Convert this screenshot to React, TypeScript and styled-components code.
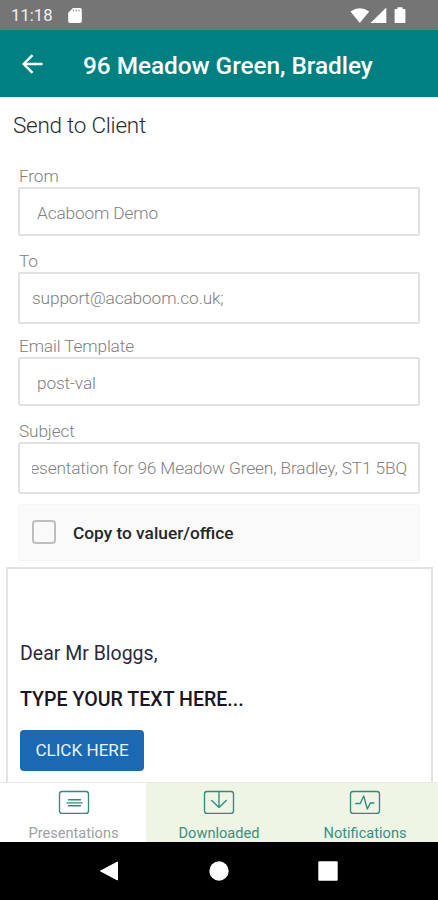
import React from "react";
import styled, { createGlobalStyle } from "styled-components";

const GlobalStyle = createGlobalStyle`
  * { box-sizing: border-box; }
  html, body { margin: 0; background: #fff; }
  body { font-family: Roboto, "Liberation Sans", sans-serif; }
`;

const Screen = styled.div`
  width: 438px;
  height: 900px;
  display: flex;
  flex-direction: column;
  overflow: hidden;
  background: #fff;
`;

const StatusBar = styled.div`
  height: 30px;
  flex: none;
  display: flex;
  align-items: center;
  padding: 2px 32px 0 11px;
  background: #757575;
  color: #fff;
`;

const Clock = styled.span`
  width: 56px;
  font-size: 16.7px;
  line-height: 20px;
  color: #f2f2f2;
`;

const StatusIcons = styled.div`
  margin-left: auto;
  display: flex;
`;

const AppBar = styled.header`
  height: 67px;
  flex: none;
  display: flex;
  align-items: center;
  padding-left: 21px;
  background: #008080;
  color: #fff;
  svg { display: block; }
`;

const AppTitle = styled.h1`
  margin: 4px 0 0 39px;
  font-size: 24.4px;
  line-height: 30px;
  font-weight: 500;
  letter-spacing: -0.05px;
  white-space: nowrap;
`;

const Content = styled.main`
  flex: 1;
  min-height: 0;
  display: flex;
  flex-direction: column;
  overflow: hidden;
`;

const Heading = styled.h2`
  margin: 14px 0 0 13px;
  height: 54px;
  font-size: 22.5px;
  line-height: 28px;
  font-weight: 300;
  letter-spacing: -0.25px;
  color: #2c2c2c;
`;

const Field = styled.div<{ $height: number }>`
  flex: none;
  height: ${(p) => p.$height}px;
  margin: 0 18px;
`;

const Label = styled.label`
  display: block;
  height: 22px;
  padding-left: 1px;
  font-size: 17.3px;
  line-height: 23px;
  font-weight: 300;
  letter-spacing: -0.15px;
  color: #808080;
`;

const Input = styled.div<{ $height: number; $inset: number; $end?: boolean }>`
  height: ${(p) => p.$height}px;
  display: flex;
  align-items: center;
  justify-content: ${(p) => (p.$end ? "flex-end" : "flex-start")};
  padding: ${(p) => (p.$height > 50 ? 0 : 2)}px 11px 0 ${(p) => p.$inset}px;
  border: 2px solid #e1e1e1;
  border-radius: 2px;
`;

const Value = styled.span`
  display: flex;
  justify-content: inherit;
  min-width: 0;
  overflow: hidden;
  white-space: nowrap;
  font-size: 17.3px;
  line-height: 24px;
  font-weight: 300;
  letter-spacing: -0.14px;
  color: #808080;
`;

const CopyOption = styled.div`
  flex: none;
  height: 57px;
  margin: 0 18px;
  display: flex;
  align-items: center;
  padding-left: 13px;
  background: #fafafa;
  border: 1px solid #f5f5f5;
  border-radius: 3px;
`;

const Checkbox = styled.span`
  width: 24px;
  height: 24px;
  margin-bottom: 2px;
  border: 2px solid #bdbdbd;
  border-radius: 4px;
`;

const CopyLabel = styled.span`
  margin-left: 17px;
  font-size: 17.3px;
  font-weight: 500;
  color: #262626;
`;

const EmailBody = styled.section`
  flex: 1;
  margin: 6px 5px 0 6px;
  padding: 70px 12px 0;
  border: 2px solid #e3e3e3;
  border-bottom: 0;
`;

const Greeting = styled.p`
  margin: 0;
  height: 46px;
  font-size: 19.5px;
  line-height: 30px;
  color: #2c2938;
`;

const Prompt = styled.p`
  margin: 0;
  height: 45px;
  font-size: 19.6px;
  line-height: 30px;
  font-weight: 500;
  color: #191724;
  white-space: nowrap;
`;

const ActionButton = styled.button`
  display: block;
  width: 124px;
  height: 41px;
  padding: 0;
  border: 0;
  border-radius: 4px;
  background: #1b69b2;
  color: #eaf2fc;
  font: 400 17.1px/41px Roboto, sans-serif;
`;

const Tabs = styled.nav`
  flex: none;
  height: 60px;
  display: grid;
  grid-template-columns: 146px 146px 146px;
  border-top: 1px solid #e8e8e8;
`;

const Tab = styled.div<{ $active?: boolean }>`
  display: flex;
  flex-direction: column;
  align-items: center;
  padding-top: 7px;
  padding-left: ${(p) => (p.$active ? 1 : 0)}px;
  background: ${(p) => (p.$active ? "#fff" : "#eff5e5")};
  color: ${(p) => (p.$active ? "#a0a0a0" : "#398f81")};
  font-size: 14.6px;
  line-height: 18px;
  svg { display: block; margin-bottom: 9px; }
`;

const TabLabel = styled.span`
  margin-top: 1px;
  font-weight: 400;
`;

const SystemBar = styled.footer`
  flex: none;
  height: 58px;
  display: flex;
  align-items: center;
  justify-content: center;
  gap: 89px;
  background: #000;
`;

const TabIcon = ({ children }: { children: React.ReactNode }) => (
  <svg width="32" height="24" viewBox="0 0 32 24" fill="none" stroke="#33897d" strokeWidth="1.35" strokeLinecap="round" strokeLinejoin="round">
    <rect x="1.5" y="1.5" width="29" height="22" rx="2.5" />
    {children}
  </svg>
);

export default function App() {
  return (
    <Screen>
      <GlobalStyle />
      <StatusBar>
        <Clock>11:18</Clock>
        <svg width="16" height="18" viewBox="0 0 16 18">
          <path d="M6 1h7a1.8 1.8 0 0 1 1.8 1.8v11.4a1.8 1.8 0 0 1-1.8 1.8H3a1.8 1.8 0 0 1-1.8-1.8V5.8z" fill="#fff" />
          <path d="M6.5 2.5v2M9.2 2.5v2M11.9 2.5v2" stroke="#999" strokeWidth="1.2" />
        </svg>
        <StatusIcons>
          <svg width="56" height="18" viewBox="0 0 56 18" fill="#fff">
            <path d="M0.5 4.5Q9.8-2.2 19.2 4.5L9.8 16z" />
            <path d="M36.3.5V16H20.5z" />
            <path d="M47.5 .3h5v1.6h2q.9 0 .9.9v12.4q0 .9-.9.9h-9q-.9 0-.9-.9V2.8q0-.9.9-.9h2z" />
          </svg>
        </StatusIcons>
      </StatusBar>
      <AppBar>
        <svg width="23" height="20" viewBox="0 0 23 20" fill="none" stroke="#fff" strokeWidth="2.4">
          <path d="M21.5 10H3M11.5 1.2L2.7 10l8.8 8.8" />
        </svg>
        <AppTitle>96 Meadow Green, Bradley</AppTitle>
      </AppBar>
      <Content>
        <Heading>Send to Client</Heading>
        <Field $height={85}>
          <Label>From</Label>
          <Input $height={49} $inset={17}><Value>Acaboom Demo</Value></Input>
        </Field>
        <Field $height={85}>
          <Label>To</Label>
          <Input $height={52} $inset={12}><Value>support@acaboom.co.uk;</Value></Input>
        </Field>
        <Field $height={85}>
          <Label>Email Template</Label>
          <Input $height={49} $inset={17}><Value>post-val</Value></Input>
        </Field>
        <Field $height={84}>
          <Label>Subject</Label>
          <Input $height={52} $inset={12} $end><Value>Presentation for 96 Meadow Green, Bradley, ST1 5BQ</Value></Input>
        </Field>
        <CopyOption>
          <Checkbox />
          <CopyLabel>Copy to valuer/office</CopyLabel>
        </CopyOption>
        <EmailBody>
          <Greeting>Dear Mr Bloggs,</Greeting>
          <Prompt>TYPE YOUR TEXT HERE...</Prompt>
          <ActionButton>CLICK HERE</ActionButton>
        </EmailBody>
      </Content>
      <Tabs>
        <Tab $active>
          <TabIcon><path d="M10.5 9.7h12M9 12.9h15M10.5 15.7h12" /></TabIcon>
          <TabLabel>Presentations</TabLabel>
        </Tab>
        <Tab>
          <TabIcon><path d="M16 2v15.5M8.7 10.5l7.3 7 7.3-7" /></TabIcon>
          <TabLabel>Downloaded</TabLabel>
        </Tab>
        <Tab>
          <TabIcon><path d="M6.8 13.5h4.4L14.7 6l3.6 13 3-6H25" /></TabIcon>
          <TabLabel>Notifications</TabLabel>
        </Tab>
      </Tabs>
      <SystemBar>
        <svg width="20" height="22" viewBox="0 0 20 22" fill="#fff"><path d="M17.5 2v18L0.5 11z" stroke="#fff" strokeLinejoin="round" /></svg>
        <svg width="20" height="20" viewBox="0 0 20 20" fill="#fff"><circle cx="10" cy="10" r="9.7" /></svg>
        <svg width="20" height="20" viewBox="0 0 20 20" fill="#fff"><rect x="0.3" y="0.3" width="19.4" height="19.4" rx="1" /></svg>
      </SystemBar>
    </Screen>
  );
}
